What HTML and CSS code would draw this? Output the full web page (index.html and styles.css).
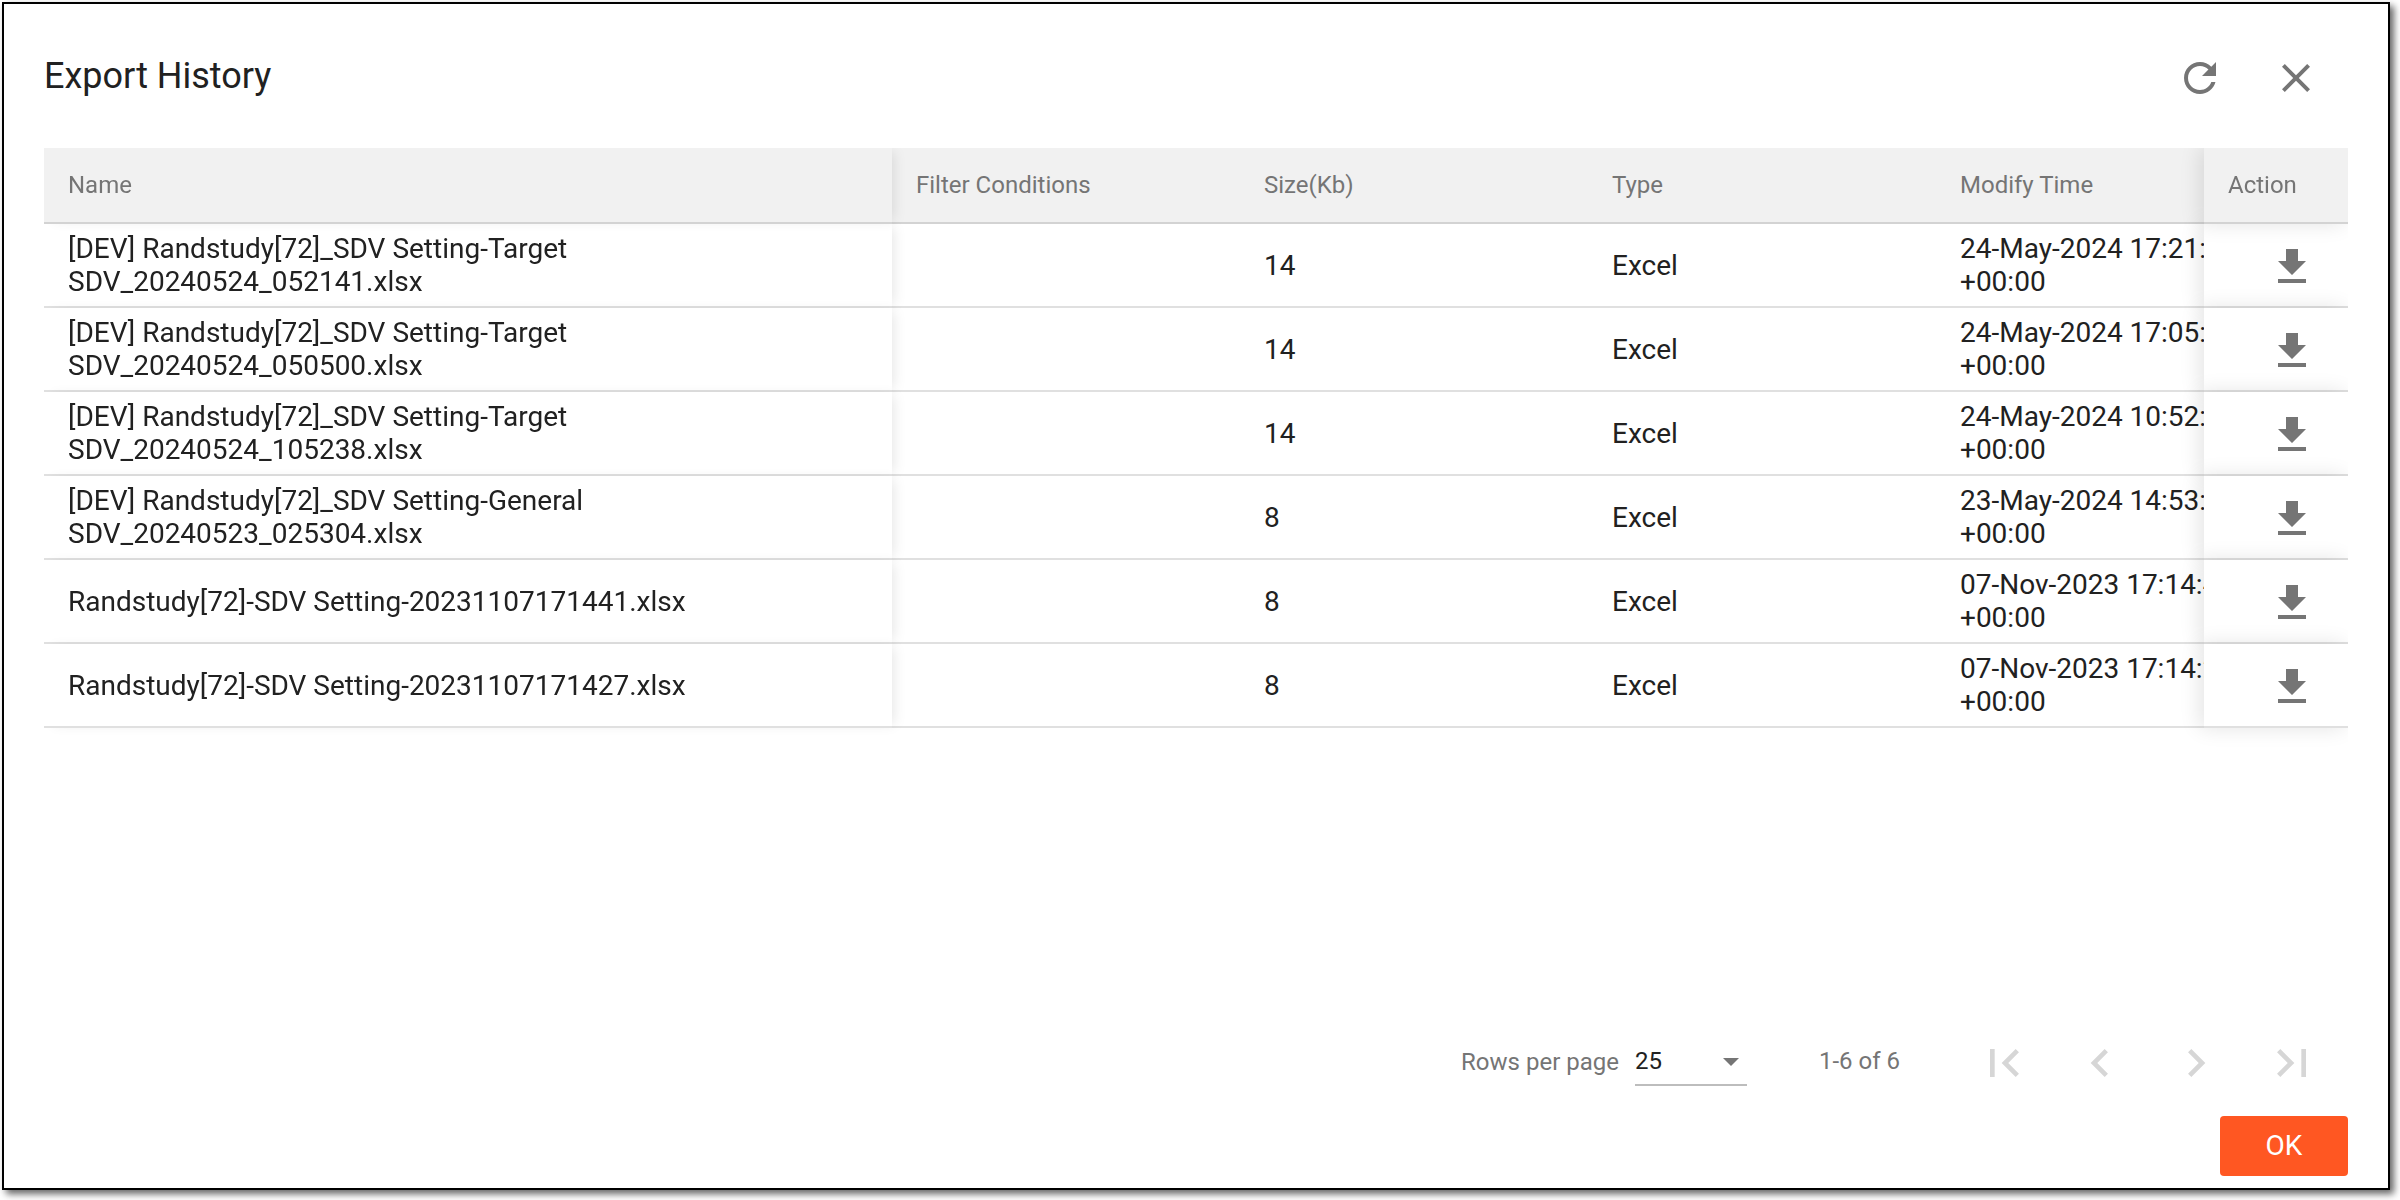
FILE: index.html
```html
<!DOCTYPE html>
<html lang="en">
<head>
<meta charset="utf-8">
<title>Export History</title>
<link rel="stylesheet" href="styles.css">
</head>
<body>
<svg class="sprite" aria-hidden="true">
  <symbol id="download" viewBox="0 0 24 24"><path d="M19 9h-4V3H9v6H5l7 7 7-7zM5 18v2h14v-2H5z"/></symbol>
</svg>
<main class="dialog">
  <header class="dialog-header">
    <h1 class="dialog-title">Export History</h1>
    <div class="dialog-tools">
      <button class="icon-button" type="button" aria-label="Refresh"><svg class="icon" viewBox="0 0 24 24"><path d="M17.65 6.35C16.2 4.9 14.21 4 12 4c-4.42 0-7.99 3.58-7.99 8s3.57 8 7.99 8c3.73 0 6.84-2.55 7.73-6h-2.08c-.82 2.33-3.04 4-5.65 4-3.31 0-6-2.69-6-6s2.69-6 6-6c1.66 0 3.14.69 4.22 1.78L13 11h7V4l-2.35 2.35z"/></svg></button>
      <button class="icon-button" type="button" aria-label="Close"><svg class="icon" viewBox="0 0 24 24"><path d="M19 6.41L17.59 5 12 10.59 6.41 5 5 6.41 10.59 12 5 17.59 6.41 19 12 13.41 17.59 19 19 17.59 13.41 12z"/></svg></button>
    </div>
  </header>

  <div class="table-scroll">
    <table class="history">
      <colgroup>
        <col><col class="col-data"><col class="col-data"><col class="col-data"><col class="col-data"><col class="col-action">
      </colgroup>
      <thead>
        <tr><th class="name">Name</th><th>Filter Conditions</th><th>Size(Kb)</th><th>Type</th><th>Modify Time</th><th class="action">Action</th></tr>
      </thead>
      <tbody>
        <tr><td class="name">[DEV] Randstudy[72]_SDV Setting-Target SDV_20240524_052141.xlsx</td><td></td><td>14</td><td>Excel</td><td>24-May-2024 17:21:41 +00:00</td><td class="action"><button class="row-button" type="button" aria-label="Download"><svg class="icon"><use href="#download"/></svg></button></td></tr>
        <tr><td class="name">[DEV] Randstudy[72]_SDV Setting-Target SDV_20240524_050500.xlsx</td><td></td><td>14</td><td>Excel</td><td>24-May-2024 17:05:00 +00:00</td><td class="action"><button class="row-button" type="button" aria-label="Download"><svg class="icon"><use href="#download"/></svg></button></td></tr>
        <tr><td class="name">[DEV] Randstudy[72]_SDV Setting-Target SDV_20240524_105238.xlsx</td><td></td><td>14</td><td>Excel</td><td>24-May-2024 10:52:38 +00:00</td><td class="action"><button class="row-button" type="button" aria-label="Download"><svg class="icon"><use href="#download"/></svg></button></td></tr>
        <tr><td class="name">[DEV] Randstudy[72]_SDV Setting-General SDV_20240523_025304.xlsx</td><td></td><td>8</td><td>Excel</td><td>23-May-2024 14:53:04 +00:00</td><td class="action"><button class="row-button" type="button" aria-label="Download"><svg class="icon"><use href="#download"/></svg></button></td></tr>
        <tr><td class="name">Randstudy[72]-SDV Setting-20231107171441.xlsx</td><td></td><td>8</td><td>Excel</td><td>07-Nov-2023 17:14:41 +00:00</td><td class="action"><button class="row-button" type="button" aria-label="Download"><svg class="icon"><use href="#download"/></svg></button></td></tr>
        <tr><td class="name">Randstudy[72]-SDV Setting-20231107171427.xlsx</td><td></td><td>8</td><td>Excel</td><td>07-Nov-2023 17:14:27 +00:00</td><td class="action"><button class="row-button" type="button" aria-label="Download"><svg class="icon"><use href="#download"/></svg></button></td></tr>
      </tbody>
    </table>
  </div>

  <nav class="paginator" aria-label="Pages">
    <div class="page-size">
      <label for="rows">Rows per page</label>
      <div class="select-box">
        <select id="rows"><option>10</option><option selected>25</option><option>50</option></select>
      </div>
    </div>
    <span class="range">1-6 of 6</span>
    <div class="page-buttons">
      <button class="icon-button" type="button" disabled aria-label="First page"><svg class="icon" viewBox="0 0 24 24"><path d="M18.41 16.59L13.82 12l4.59-4.59L17 6l-6 6 6 6zM6 6h2v12H6z"/></svg></button>
      <button class="icon-button" type="button" disabled aria-label="Previous page"><svg class="icon" viewBox="0 0 24 24"><path d="M15.41 7.41L14 6l-6 6 6 6 1.41-1.41L10.83 12z"/></svg></button>
      <button class="icon-button" type="button" disabled aria-label="Next page"><svg class="icon" viewBox="0 0 24 24"><path d="M10 6L8.59 7.41 13.17 12l-4.58 4.59L10 18l6-6z"/></svg></button>
      <button class="icon-button" type="button" disabled aria-label="Last page"><svg class="icon" viewBox="0 0 24 24"><path d="M5.59 7.41L10.18 12l-4.59 4.59L7 18l6-6-6-6zM16 6h2v12h-2z"/></svg></button>
    </div>
  </nav>

  <footer class="dialog-actions">
    <button class="ok" type="button">OK</button>
  </footer>
</main>
</body>
</html>
```
FILE: styles.css
```css
* { box-sizing: border-box; }

body {
  margin: 0;
  padding: 2px 10px 10px 2px;
  background: #fff;
  color: #212121;
  font-family: Roboto, "Liberation Sans", sans-serif;
  font-size: 28px;
  line-height: 33px;
}

button, select { font: inherit; color: inherit; border: 0; background: none; margin: 0; padding: 0; }

.sprite { position: absolute; width: 0; height: 0; }

.dialog {
  display: flex;
  flex-direction: column;
  min-height: calc(100vh - 12px);
  padding: 0 40px 12px;
  border: 2px solid #000;
  background: #fff;
  box-shadow: 4px 4px 7px rgba(0, 0, 0, .6);
}

.dialog-header {
  display: flex;
  justify-content: space-between;
  padding: 26px 4px 22px 0;
}
.dialog-title { margin: 0; font-size: 36px; font-weight: 400; line-height: 92px; }
.dialog-tools, .page-buttons { display: flex; }

.icon-button {
  display: flex;
  align-items: center;
  justify-content: center;
  width: 96px;
  height: 96px;
  color: #757575;
}
.icon-button:disabled { color: #d6d6d6; }
.icon { display: block; width: 48px; height: 48px; fill: currentColor; }
.page-buttons .icon { width: 56px; height: 56px; }

.table-scroll { flex: 1; overflow: auto hidden; scrollbar-width: none; }

.history {
  width: 100%;
  min-width: 2384px;
  table-layout: fixed;
  border-collapse: separate;
  border-spacing: 0;
}
.col-data { width: 348px; }
.col-action { width: 144px; }

.history th, .history td {
  padding: 0 24px;
  text-align: left;
  vertical-align: middle;
  border-bottom: 2px solid #e0e0e0;
}
.history th {
  height: 76px;
  background: #f1f1f1;
  border-color: #d3d3d3;
  color: #757575;
  font-size: 24px;
  font-weight: 400;
}
.history td { height: 84px; }

.history .name, .history .action { position: sticky; z-index: 1; }
.history .name { left: 0; box-shadow: 6px 0 12px -4px rgba(0, 0, 0, .1); }
.history .action { right: 0; box-shadow: -4px 0 20px rgba(0, 0, 0, .11); }
.history td.name, .history td.action { background: #fff; }
.history th.name, .history th.action { z-index: 2; }
.history td.action { padding: 4px 8px 0 0; }

.row-button { display: flex; justify-content: center; width: 96px; margin-left: auto; color: #757575; }

.paginator {
  display: flex;
  align-items: center;
  justify-content: flex-end;
  padding-right: 8px;
  color: #757575;
  font-size: 24px;
}
.page-size { display: flex; align-items: center; gap: 16px; padding-bottom: 2px; }
.range { margin: 0 56px 0 72px; padding-bottom: 4px; }

.select-box { position: relative; width: 112px; }
.select-box select {
  display: block;
  appearance: none;
  width: 100%;
  height: 48px;
  border-bottom: 2px solid #bdbdbd;
  border-radius: 0;
  color: #212121;
}
.select-box::after {
  content: "";
  position: absolute;
  top: 20px;
  right: 8px;
  border: 8px solid transparent;
  border-top-color: #757575;
  border-bottom: 0;
  pointer-events: none;
}

.dialog-actions { display: flex; justify-content: flex-end; padding-top: 5px; }
.ok {
  width: 128px;
  height: 60px;
  padding-bottom: 2px;
  border-radius: 4px;
  background: #ff5722;
  color: #fff;
}
```
